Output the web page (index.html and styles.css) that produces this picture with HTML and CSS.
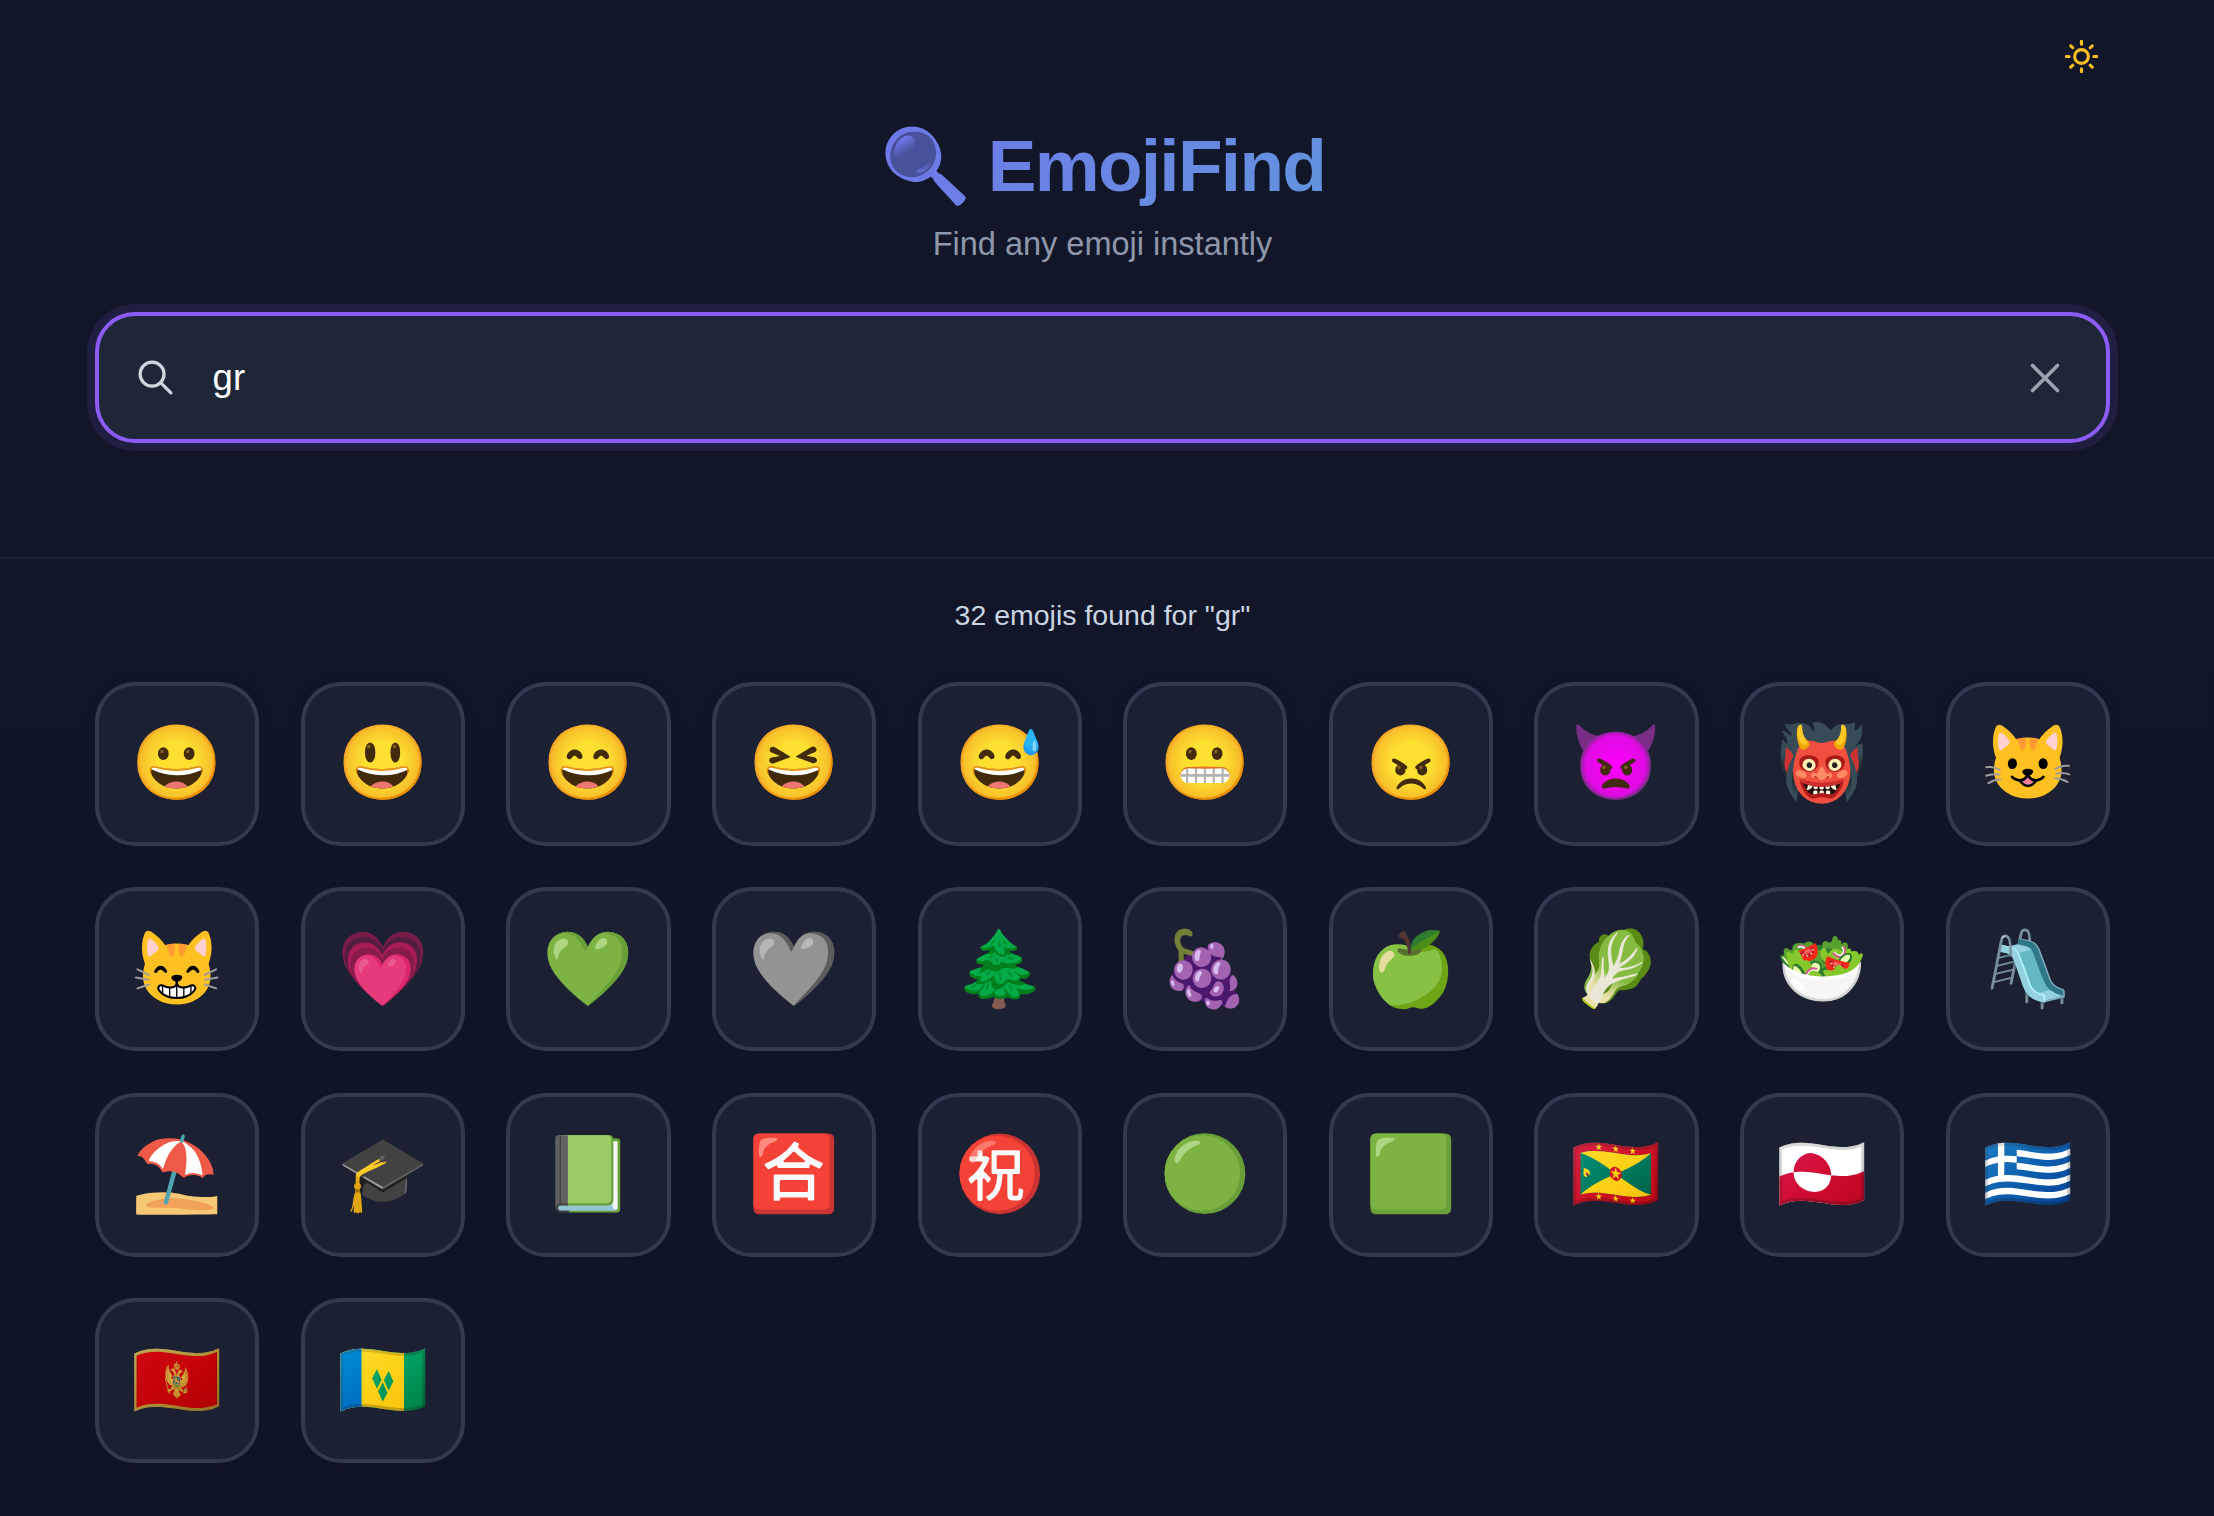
FILE: index.html
```html
<!DOCTYPE html>
<html lang="en">
<head>
<meta charset="utf-8">
<title>EmojiFind</title>
<link rel="stylesheet" href="styles.css">
</head>
<body>
<header class="header">
  <div class="theme-row">
    <button class="theme-btn" aria-label="Toggle theme">
      <svg width="33" height="33" viewBox="0 0 24 24" fill="none" stroke="#fbbf24" stroke-width="2.3" stroke-linecap="round" stroke-linejoin="round"><circle cx="12" cy="12" r="5"/><path d="M12 1v2M12 21v2M4.22 4.22l1.42 1.42M18.36 18.36l1.42 1.42M1 12h2M21 12h2M4.22 19.78l1.42-1.42M18.36 5.64l1.42-1.42"/></svg>
    </button>
  </div>
  <h1 class="title">🔍 EmojiFind</h1>
  <p class="subtitle">Find any emoji instantly</p>
  <div class="search">
    <svg class="search-icon" width="41" height="41" viewBox="0 0 24 24" fill="none" stroke="#d1d5db" stroke-width="1.9" stroke-linecap="round"><circle cx="10" cy="10" r="7"/><path d="M21 21l-6-6"/></svg>
    <span class="query">gr</span>
    <svg class="clear-icon" width="50" height="50" viewBox="0 0 24 24" fill="none" stroke="#9ca3af" stroke-width="1.7" stroke-linecap="round"><path d="M18 6 6 18M6 6l12 12"/></svg>
  </div>
</header>
<main class="results">
  <p class="count">32 emojis found for "gr"</p>
  <div class="grid">
    <div class="card">😀</div><div class="card">😃</div><div class="card">😄</div><div class="card">😆</div><div class="card">😅</div><div class="card">😬</div><div class="card">😠</div><div class="card">👿</div><div class="card">👹</div><div class="card">😺</div>
    <div class="card">😸</div><div class="card">💗</div><div class="card">💚</div><div class="card">🩶</div><div class="card">🌲</div><div class="card">🍇</div><div class="card">🍏</div><div class="card">🥬</div><div class="card">🥗</div><div class="card">🛝</div>
    <div class="card">⛱️</div><div class="card">🎓</div><div class="card">📗</div><div class="card">🈴</div><div class="card">㊗️</div><div class="card">🟢</div><div class="card">🟩</div><div class="card">🇬🇩</div><div class="card">🇬🇱</div><div class="card">🇬🇷</div>
    <div class="card">🇲🇪</div><div class="card">🇻🇨</div>
  </div>
</main>
</body>
</html>
```
FILE: styles.css
```css
* { box-sizing: border-box; }
html { background: #101528; }
body {
  margin: 0;
  min-height: 1516px;
  background: linear-gradient(180deg, #111729, #101528);
  font-family: "Liberation Sans", Arial, sans-serif;
  color: #f9fafb;
}
.header {
  padding: 32px 104px 114px 95px;
  border-bottom: 2px solid #1c2235;
  text-align: center;
}
.theme-row { display: flex; justify-content: flex-end; height: 48px; }
.theme-btn { background: none; border: 0; padding: 0; margin: 0 5px 0 0; width: 48px; height: 48px; display: flex; align-items: center; justify-content: center; }
.title {
  margin: 43px auto 0;
  width: fit-content;
  font-size: 73px;
  line-height: 86px;
  font-weight: 700;
  letter-spacing: -1.7px;
  background: linear-gradient(135deg, #7076ea, #6294dd);
  -webkit-background-clip: text;
  background-clip: text;
  -webkit-text-fill-color: transparent;
}
.subtitle { margin: 15px 0 0; font-size: 32.5px; line-height: 40px; color: #8f98ab; }
.search {
  margin-top: 48px;
  height: 131px;
  display: flex;
  align-items: center;
  gap: 37px;
  padding: 0 36.5px 0 35.6px;
  background: #1e2637;
  border: 4px solid #8b5cf6;
  border-radius: 40px;
  box-shadow: 0 0 0 8px rgba(139, 92, 246, 0.12);
}
.query { flex: 1; text-align: left; font-size: 36.5px; color: #fff; }
.results { padding: 38px 104px 0 95px; }
.count { margin: 0 0 48.5px; text-align: center; font-size: 28.5px; line-height: 36px; color: #cbd5e1; }
.grid { display: grid; grid-template-columns: repeat(10, 1fr); gap: 41.4px; }
.card {
  aspect-ratio: 1;
  display: flex;
  align-items: center;
  justify-content: center;
  background: #1b2033;
  border: 4px solid #33394f;
  border-radius: 40px;
  box-shadow: 0 4px 12px rgba(0, 0, 0, 0.1);
  font-family: "Noto Color Emoji", sans-serif;
  font-size: 73.5px;
  line-height: 1;
}
```
